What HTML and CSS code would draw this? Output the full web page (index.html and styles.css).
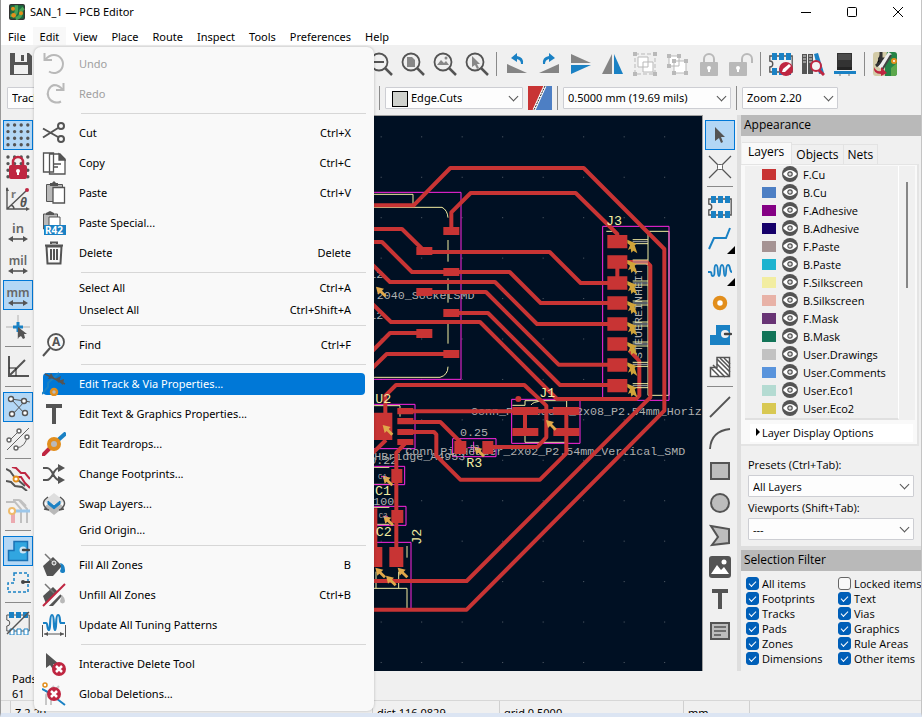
FILE: index.html
```html
<!DOCTYPE html>
<html lang="en">

<head>
    <meta charset="UTF-8">
    <meta name="viewport" content="width=device-width, initial-scale=1.0">
    <title>SAN_1 — PCB Editor</title>
    <link rel="stylesheet" href="styles.css">
</head>

<body>
    <!-- Icon set -->
    <svg class="sprite" width="0" height="0" aria-hidden="true">
        <symbol id="i-logo" viewBox="0 0 24 24"><rect x="1" y="1" width="22" height="22" rx="2" fill="#1d6b41" stroke="#333" stroke-width="2"/><path d="M2 17q8 1 9-6V2M10 22q9-2 8-12l4-4" stroke="#48a356" stroke-width="5" fill="none"/><circle cx="6" cy="7" r="3" fill="#e28e1c"/><circle cx="7" cy="17" r="3.500" fill="#e28e1c"/><circle cx="18" cy="14" r="3" fill="#e28e1c"/></symbol>
        <symbol id="i-undo" viewBox="0 0 24 24"><path d="M3 8Q7 3 12 3a9 9 0 1 1-5 16.500M2.500 1v7H10" fill="none" stroke="#b9b9b9" stroke-width="2"/></symbol>
        <symbol id="i-redo" viewBox="0 0 24 24"><path d="M21 8Q17 3 12 3a9 9 0 1 0 7 16.500M21.500 1v7H14" fill="none" stroke="#b9b9b9" stroke-width="2"/></symbol>
        <symbol id="i-cut" viewBox="0 0 24 24"><g fill="none" stroke="#545454" stroke-width="2"><path d="M1 7.500 16 16M1 16.500 16 7"/><circle cx="19" cy="5" r="3"/><circle cx="19" cy="18" r="3"/></g></symbol>
        <symbol id="i-copy" viewBox="0 0 24 24"><g fill="#fff" stroke="#545454" stroke-width="1.300"><path d="M1.500 2h10v19h-10zM7.500 3H18l5 5v15H7.500z"/><path d="M17 3v6h6z" fill="#545454"/><path d="M11 13h8M11 16h5"/></g></symbol>
        <symbol id="i-paste" viewBox="0 0 24 24"><path d="M4.500 3.500h16v17h-16z" fill="#b9b9b9" stroke="#545454"/><path d="M8 5V2h2l2-2 2 2h2v3z" fill="#545454"/><path d="M11 6.500h11.500V22H11z" fill="#fff" stroke="#545454" stroke-width="1.300"/></symbol>
        <symbol id="i-pastespecial" viewBox="0 0 24 24"><path d="M1.500 3h14v15h-14z" fill="#b9b9b9" stroke="#545454"/><path d="M4 4V2l4-2 4 2v2z" fill="#545454"/><path d="M7 6h11v12H7z" fill="#fff" stroke="#545454"/><path d="M2 14h22v10H2z" fill="#1a81c4"/><text x="3" y="22.500" font-size="10" font-weight="bold" fill="#fff">R42</text></symbol>
        <symbol id="i-trash" viewBox="0 0 24 24"><path d="M4.500 5.500h15l-1 17h-13z" fill="#f9f9f9" stroke="#545454" stroke-width="2"/><path d="M3 4.500h18M9 3V1.500h6V3M9 8v11M12 8v11M15 8v11" fill="none" stroke="#545454" stroke-width="2"/></symbol>
        <symbol id="i-find" viewBox="0 0 24 24"><circle cx="14" cy="9" r="8" fill="none" stroke="#545454" stroke-width="1.800"/><path d="m8 15-7 8" stroke="#545454" stroke-width="2"/><text x="10" y="13" font-size="12" font-weight="bold" fill="#545454">A</text></symbol>
        <symbol id="i-trackvia" viewBox="0 0 24 24"><path d="M0 22 6 15v-4L17 1" stroke="#1a81c4" stroke-width="2" fill="none"/><path d="m3 2 20 10" stroke="#545454" stroke-width="1.500"/><path d="m12 6-6 1 3-6zM13 7l6-3-2 7zM16 9l6-2-1 6z" fill="#545454"/><circle cx="12" cy="20" r="3" fill="#b9b9b9" stroke="#e28e1c" stroke-width="2.500"/></symbol>
        <symbol id="i-text" viewBox="0 0 24 24"><path d="M4 2h16v4h-6v16h-4V6H4z" fill="#545454"/></symbol>
        <symbol id="i-teardrop" viewBox="0 0 24 24"><path d="m15 9 9-8" stroke="#1a81c4" stroke-width="4"/><path d="m8 16-8 8" stroke="#bf2641" stroke-width="4"/><circle cx="12" cy="12" r="5" fill="#b9b9b9" stroke="#e28e1c" stroke-width="4"/></symbol>
        <symbol id="i-shuffle" viewBox="0 0 24 24"><path d="M1 6h4q3 0 6 6t6 6h3M1 18h4q3 0 6-6t6-6h3" fill="none" stroke="#545454" stroke-width="2"/><path d="m16 2 7 4-7 4zM16 14l7 4-7 4z" fill="#545454"/></symbol>
        <symbol id="i-swap" viewBox="0 0 24 24"><path d="m12 7 10 8-10 8-10-8z" fill="#b9b9b9"/><path d="m12 1 10 8-10 8L2 9z" fill="#dedede"/><path d="m6 9 6 5 6-5v3l-6 5-6-5z" fill="#1a81c4" stroke="#1a81c4"/><path d="M6 5q-9 6 0 13M18 5q9 6 0 13M7 18l-5-1M17 18l5-1" stroke="#545454" fill="none" stroke-width="1.500"/></symbol>
        <symbol id="i-fill" viewBox="0 0 24 24"><path d="m1 13 10-9 9 9-9 10H5z" fill="#545454"/><path d="m3 1 9 9" stroke="#777" stroke-width="1.500"/><circle cx="12" cy="10" r="2" fill="#777" stroke="#fff"/><path d="M18 10q5 1 5 7a2.500 2.500 0 0 1-5 1q2-4 0-8z" fill="#1a81c4"/></symbol>
        <symbol id="i-unfill" viewBox="0 0 24 24"><path d="m1 13 10-9 9 9-9 10H5z" fill="#545454"/><path d="m3 1 9 9" stroke="#777" stroke-width="1.500"/><path d="M20 12q3 3 3 6a2.500 2.500 0 0 1-5 0z" fill="#b9b9b9"/><path d="M3 24 24 3" stroke="#f9f9f9" stroke-width="4"/><path d="M1 23 23 1" stroke="#bf2641" stroke-width="2"/></symbol>
        <symbol id="i-tuning" viewBox="0 0 24 24"><path d="M1 10h3c2 0 1 7 3 7s0-15 3-15 1 15 3 15 0-15 3-15 1 8 3 8h4" fill="none" stroke="#1a81c4" stroke-width="2.200"/><path d="M.5 12v12M23.500 12v12M2 21h20" stroke="#545454"/><path d="m2 21 4-2v4zM22 21l-4-2v4z" fill="#545454"/></symbol>
        <symbol id="i-delcursor" viewBox="0 0 24 24"><path d="M4 1v15l4-3 4 6 3-2-4-5h6z" fill="#545454"/><circle cx="17" cy="17" r="7" fill="#bf2641"/><path d="m14 14 6 6m0-6-6 6" stroke="#fff" stroke-width="2.500"/></symbol>
        <symbol id="i-delglobal" viewBox="0 0 24 24"><path d="M4 23V13l8-9M9 23V13l8-9" fill="none" stroke="#c8c8c8" stroke-width="2"/><path d="m0 7 6 3 17 13" stroke="#1a81c4" stroke-width="2"/><circle cx="3" cy="3" r="2" fill="#fff" stroke="#e28e1c" stroke-width="1.500"/><circle cx="12" cy="12" r="7" fill="#bf2641"/><path d="m9 9 6 6m0-6-6 6" stroke="#fff" stroke-width="2.500"/></symbol>
        <symbol id="i-save" viewBox="0 0 24 24"><path d="M1 1h19l3 3v19H1z" fill="#545454"/><path d="M6 1h12v9H6zM5 13h14v9H5z" fill="#f0f0f0"/><path d="M12 3h3v6h-3z" fill="#545454"/></symbol>
        <symbol id="i-lens" viewBox="0 0 24 24"><g fill="none" stroke="#545454"><circle cx="10" cy="10" r="8.500" stroke-width="1.800"/><path d="m16 16 7 7" stroke-width="2.500"/></g></symbol>
        <symbol id="i-zoomout" viewBox="0 0 24 24"><use href="#i-lens"/><path d="M5 10h10" stroke="#545454" stroke-width="2"/></symbol>
        <symbol id="i-zoompage" viewBox="0 0 24 24"><use href="#i-lens"/><path d="M6 5h5l3 3v7H6z" fill="#888"/></symbol>
        <symbol id="i-zoomobj" viewBox="0 0 24 24"><use href="#i-lens"/><path d="m4 13 4-5 3 3 2-2 3 4z" fill="#888"/><circle cx="13" cy="6" r="1.500" fill="#888"/></symbol>
        <symbol id="i-zoomsel" viewBox="0 0 24 24"><use href="#i-lens"/><path d="M7 4v11l3-2 2 4 2-1-2-4h3z" fill="#888"/></symbol>
        <symbol id="i-rotl" viewBox="0 0 24 24"><path d="M2 12v9h20z" fill="#848484"/><path d="m6 6 6-5v3q7 1 6 8h-2q0-4-4-5v3z" fill="#1a81c4"/></symbol>
        <symbol id="i-rotr" viewBox="0 0 24 24"><path d="M22 12v9H2z" fill="#848484"/><path d="m18 6-6-5v3q-7 1-6 8h2q0-4 4-5v3z" fill="#1a81c4"/></symbol>
        <symbol id="i-flipv" viewBox="0 0 24 24"><path d="M2 2v9h20z" fill="#848484"/><path d="M2 13v9l20-9z" fill="#1a81c4"/></symbol>
        <symbol id="i-fliph" viewBox="0 0 24 24"><path d="M11 2v20H1z" fill="#848484"/><path d="M13 2v20h9z" fill="#1a81c4"/></symbol>
        <symbol id="i-group" viewBox="0 0 24 24"><g fill="#fff" stroke="#b9b9b9"><path d="M2 2h20v20H2z" fill="none" stroke-dasharray="4 2"/><path d="M5 5h10v10H5zM10 10h10v10H10z"/></g><path d="M0 0h4v4H0zM20 0h4v4h-4zM0 20h4v4H0zM20 20h4v4h-4z" fill="#b9b9b9"/></symbol>
        <symbol id="i-ungroup" viewBox="0 0 24 24"><path d="M4 4h10v10H4zM9 9h12v12H9z" fill="#fff" stroke="#b9b9b9"/><path d="M2 2h4v4H2zM12 2h4v4h-4zM2 12h4v4H2zM7 7h4v4H7zM19 7h4v4h-4zM7 19h4v4H7zM19 19h4v4h-4z" fill="#b9b9b9"/></symbol>
        <symbol id="i-lock" viewBox="0 0 24 24"><path d="M7 11V7a5 5 0 0 1 10 0v4" fill="none" stroke="#b9b9b9" stroke-width="2"/><rect x="3" y="10" width="18" height="14" rx="1" fill="#b9b9b9"/><circle cx="12" cy="16" r="2" fill="#fff"/><path d="M11 16h2v4h-2z" fill="#fff"/></symbol>
        <symbol id="i-unlock" viewBox="0 0 24 24"><path d="M13 11V7a5 5 0 0 1 10 0v4" fill="none" stroke="#b9b9b9" stroke-width="2"/><rect x="0" y="10" width="18" height="14" rx="1" fill="#b9b9b9"/><circle cx="9" cy="16" r="2" fill="#fff"/><path d="M8 16h2v4H8z" fill="#fff"/></symbol>
        <symbol id="i-fp" viewBox="0 0 24 24"><path d="M.8 4h22.400v16H.8v-5q3 0 3-3t-3-3z" fill="none" stroke="#545454" stroke-width="1.300"/><path d="M3 1h5v7H3zM10 1h5v7h-5zM17 1h5v7h-5zM3 16h5v7H3zM10 16h5v7h-5zM17 16h5v7h-5z" fill="#1a81c4"/></symbol>
        <symbol id="i-fpedit" viewBox="0 0 24 24"><use href="#i-fp"/><circle cx="17" cy="17" r="7" fill="#bf2641"/><path d="m13 20 1-3 6-5 2 2-6 6z" fill="#fff"/></symbol>
        <symbol id="i-libs" viewBox="0 0 24 24"><path d="M1 2h5v20H1zM7 2h5v20H7z" fill="#545454"/><path d="m13 2 4-1 6 20-5 1z" fill="#1a81c4"/><path d="M2 4h3M2 7h3M2 10h3M8 4h3M8 7h3M8 10h3" stroke="#ddd"/><circle cx="15" cy="14" r="5" fill="#f4f4f4" stroke="#bf2641" stroke-width="2"/><path d="m18 18 5 5" stroke="#bf2641" stroke-width="3"/></symbol>
        <symbol id="i-view3d" viewBox="0 0 24 24"><path d="M4 1h15v14H4z" fill="#333"/><path d="M5 2h13v6H5z" fill="#4c4c4c"/><path d="M4 15h15v3H4z" fill="#242424"/><path d="M1 19h22v3H1z" fill="#1a81c4"/><path d="M7 22v2M16 22v2" stroke="#777"/></symbol>
        <symbol id="i-update" viewBox="0 0 24 24"><rect width="24" height="24" rx="3" fill="#d3cba7"/><path d="M14 0h7q3 0 3 3v18q0 3-3 3h-9V12z" fill="#258447"/><path d="M18 24V16l6-5v10q0 3-3 3z" fill="#5ca74b"/><path d="M8 0v10l-5 4M5 7h7" stroke="#333" stroke-width="3"/><path d="M17 1 7 16" stroke="#eee" stroke-width="4"/><path d="M18 3 9 18" stroke="#444" stroke-width="2"/><circle cx="21" cy="9" r="2" fill="#fff" stroke="#e28e1c" stroke-width="2"/><path d="M1 15q2 5 7 4v-4l6 6-6 3v-2q-8 0-7-7z" fill="#bf2641"/></symbol>
        <symbol id="i-pair" viewBox="0 0 24 24"><path d="M0 0h18L7 24H0z" fill="#c83434"/><path d="M18 0h6v24H7z" fill="#4d7fc4"/><path d="M17 0 6 24" stroke="#fff" stroke-width="3"/><path d="M17 0 6 24" stroke="#222" stroke-dasharray="2 1"/></symbol>
        <symbol id="i-grid" viewBox="0 0 24 24"><g fill="none" stroke="#545454" stroke-width="3.400" stroke-linecap="round" stroke-dasharray="0 6.600"><path d="M2 2h21M2 8.600h21M2 15.200h21M2 21.800h21"/></g></symbol>
        <symbol id="i-gridlock" viewBox="0 0 24 24"><use href="#i-grid"/><path d="M7 11V7a5 5 0 0 1 10 0v4" fill="none" stroke="#bf2641" stroke-width="2.500"/><rect x="3" y="10" width="18" height="14" rx="2" fill="#bf2641"/><circle cx="12" cy="16" r="2" fill="#fff"/><path d="M11 16h2v4h-2z" fill="#fff"/></symbol>
        <symbol id="i-polar" viewBox="0 0 24 24"><path d="M1 1v21h21M1 22 20 4M5 18q3 1 3 4" fill="none" stroke="#545454" stroke-width="1.400"/><path d="m1 0 2 4h-4zM24 22l-4-2v4z" fill="#545454"/><circle cx="21" cy="3" r="2" fill="#bf2641"/><text x="5" y="11" font-size="11" font-weight="bold" fill="#777">r</text><text x="14" y="20" font-size="12" font-weight="bold" font-style="italic" fill="#545454">θ</text></symbol>
        <symbol id="i-arrows" viewBox="0 0 24 24"><path d="M4 20h16" stroke="#545454" stroke-width="1.600"/><path d="m2 20 5-3v6zM22 20l-5-3v6z" fill="#545454"/></symbol>
        <symbol id="i-in" viewBox="0 0 24 24"><text x="12" y="14" text-anchor="middle" font-size="13" font-weight="600" fill="#666">in</text><use href="#i-arrows"/></symbol>
        <symbol id="i-mil" viewBox="0 0 24 24"><text x="12" y="14" text-anchor="middle" font-size="12" font-weight="600" fill="#666">mil</text><use href="#i-arrows"/></symbol>
        <symbol id="i-mm" viewBox="0 0 24 24"><text x="12" y="14" text-anchor="middle" font-size="12" font-weight="600" fill="#666">mm</text><use href="#i-arrows"/></symbol>
        <symbol id="i-cross" viewBox="0 0 24 24"><path d="M0 12h24M12 0v24" stroke="#b0b0b0"/><path d="M7 12h10M12 7v10" stroke="#1a81c4" stroke-width="3"/><path d="M12 12v11l3-2 2 3 2-1-1-4h3z" fill="#545454"/></symbol>
        <symbol id="i-angle" viewBox="0 0 24 24"><path d="M3 1v20h20M3 21 19 5" fill="none" stroke="#545454" stroke-width="2"/><path d="M3 13h7v8" fill="none" stroke="#222"/></symbol>
        <symbol id="i-rats" viewBox="0 0 24 24"><path d="m5 4 14 2 5 1M19 6 6 20M5 4l14 15" fill="none" stroke="#545454"/><g fill="#fff" stroke="#545454" stroke-width="1.400"><circle cx="5" cy="4" r="2.500"/><circle cx="18" cy="6" r="2.500"/><circle cx="6" cy="19" r="2.500"/><circle cx="19" cy="18" r="2.500"/></g></symbol>
        <symbol id="i-curved" viewBox="0 0 24 24"><path d="M1 23 23 1M4 13 13 4M21 9q-1 11-11 12" fill="none" stroke="#666"/><g fill="#fff" stroke="#666" stroke-width="1.400"><circle cx="3" cy="13" r="2"/><circle cx="13" cy="4" r="2"/><circle cx="21" cy="10" r="2"/><circle cx="10" cy="21" r="2"/></g></symbol>
        <symbol id="i-nets" viewBox="0 0 24 24"><path d="m0 2 4 2 5 7M12 13l7 6M0 14l5 1 4 4 7 1 5 4" fill="none" stroke="#545454" stroke-width="2"/><path d="m6 0 4 1 5 5h4l5 6M12 10h3l4 6 5 5" fill="none" stroke="#bf2641" stroke-width="2"/><circle cx="10" cy="12" r="2.500" fill="#fff" stroke="#e28e1c" stroke-width="1.800"/></symbol>
        <symbol id="i-fade" viewBox="0 0 24 24"><path d="M0 3h9l6 7v14M7 1h6l8 9v14M14 1l6 6" fill="none" stroke="#c0c0c0" stroke-width="2"/><path d="M7 14v10" stroke="#ecaab0" stroke-width="4"/><path d="M9 12h15" stroke="#9cc7ea" stroke-width="3"/><circle cx="6" cy="12" r="3" fill="#fff" stroke="#eebb6c" stroke-width="2"/></symbol>
        <symbol id="i-zonefill" viewBox="0 0 24 24"><path d="M8 2.500h13.500v19H2.500v-10H8z" fill="#31a6e0" stroke="#1a71b4" stroke-width="1.500"/><circle cx="17" cy="11" r="3.500" fill="#cde6f7"/><path d="M17 11h6" stroke="#444" stroke-width="2.400" stroke-linecap="round"/></symbol>
        <symbol id="i-zoneline" viewBox="0 0 24 24"><path d="M8 2h14v19H2V12h6z" fill="none" stroke="#1a81c4" stroke-width="1.500" stroke-dasharray="3 2"/><path d="M17 11h7" stroke="#444" stroke-width="2"/><circle cx="17" cy="11" r="2" fill="#444"/></symbol>
        <symbol id="i-fpline" viewBox="0 0 24 24"><path d="M.8 4h22.400v16H.8v-5q3 0 3-3t-3-3z" fill="none" stroke="#545454"/><path d="M3 1h5v6H3zM10 1h5v6h-5zM17 1h5v6h-5z" fill="#1a81c4"/><path d="M4 18h4v6H4zM11 18h4v6h-4zM18 18h4v6h-4z" fill="#fff" stroke="#1a81c4"/><path d="M1 23 23 1" stroke="#545454" stroke-width="1.500"/></symbol>
        <symbol id="i-cursor" viewBox="0 0 24 24"><path d="M7 4v14l4-3 2 5 2-1-2-5h4z" fill="#545454"/></symbol>
        <symbol id="i-junction" viewBox="0 0 24 24"><path d="m1 1 22 22M23 1 1 23" stroke="#555" stroke-width="1.200"/><rect x="9.500" y="9.500" width="5" height="5" rx="1" fill="#fff" stroke="#666"/></symbol>
        <symbol id="i-track" viewBox="0 0 24 24"><path d="m1 22 5-11h12l4-10" fill="none" stroke="#1a81c4" stroke-width="2"/></symbol>
        <symbol id="i-meander" viewBox="0 0 24 24"><path d="M0 13h2c3 0 0 4 3 4s0-11 3-11 1 11 3 11 0-11 3-11 1 11 3 11 0-11 3-11 1 7 4 7" fill="none" stroke="#1a81c4" stroke-width="1.800"/></symbol>
        <symbol id="i-via" viewBox="0 0 24 24"><circle cx="12" cy="12" r="5" fill="#fff" stroke="#e28e1c" stroke-width="4.500"/></symbol>
        <symbol id="i-zone" viewBox="0 0 24 24"><path d="M8 2h14v20H2V12h6z" fill="#1a81c4"/><circle cx="17" cy="11" r="4" fill="#f0f0f0"/><path d="M17 11h6" stroke="#444" stroke-width="2.400" stroke-linecap="round"/></symbol>
        <symbol id="i-hatch" viewBox="0 0 24 24"><path d="M9 2.500h12.500v19h-19v-9H9z" fill="#fff" stroke="#545454" stroke-width="1.500"/><path d="m3 13 8 8M5 10l12 12M9 9l12 12M9 4l13 13M12 3l10 10M16 3l6 6" stroke="#545454" stroke-width="1.500"/></symbol>
        <symbol id="i-line" viewBox="0 0 24 24"><path d="M2 22 22 2" stroke="#545454" stroke-width="1.800"/></symbol>
        <symbol id="i-arc" viewBox="0 0 24 24"><path d="M2 22Q3 4 22 2" fill="none" stroke="#545454" stroke-width="1.800"/></symbol>
        <symbol id="i-rect" viewBox="0 0 24 24"><path d="M3 4h18v16H3z" fill="#bdbdbd" stroke="#545454" stroke-width="2"/></symbol>
        <symbol id="i-circle" viewBox="0 0 24 24"><circle cx="12" cy="12" r="9" fill="#bdbdbd" stroke="#545454" stroke-width="2"/></symbol>
        <symbol id="i-poly" viewBox="0 0 24 24"><path d="m3 3 18 3v14L4 22l6-8z" fill="#bdbdbd" stroke="#545454" stroke-width="2"/></symbol>
        <symbol id="i-image" viewBox="0 0 24 24"><rect x="1" y="1" width="22" height="22" rx="3" fill="#545454"/><path d="m3 19 6-9 4 5 3-3 5 7z" fill="#fff"/><circle cx="16" cy="7" r="2.500" fill="#fff"/></symbol>
        <symbol id="i-textbox" viewBox="0 0 24 24"><path d="M3 4h18v16H3z" fill="#bdbdbd" stroke="#545454" stroke-width="2"/><path d="M6 8h12M6 12h12M6 16h7" stroke="#545454" stroke-width="1.500"/></symbol>
        <symbol id="i-eye" viewBox="0 0 16 16"><circle cx="8" cy="8" r="8" fill="#545454"/><path d="M1 8q7-8 14 0-7 8-14 0z" fill="#fff"/><circle cx="8" cy="8" r="2.200" fill="#ddd" stroke="#545454" stroke-width="1.200"/></symbol>
    </svg>

    <header class="titlebar">
        <svg class="app-icon"><use href="#i-logo"/></svg>
        <span class="title">SAN_1 — PCB Editor</span>
        <div class="window-buttons">
            <button type="button" aria-label="Minimize"><svg viewBox="0 0 12 12"><path d="M1 6.500h10" stroke="#000"/></svg></button>
            <button type="button" aria-label="Maximize"><svg viewBox="0 0 12 12"><rect x="1.500" y="1.500" width="9" height="9" rx="1" fill="none" stroke="#000"/></svg></button>
            <button type="button" aria-label="Close"><svg viewBox="0 0 12 12"><path d="m1 1 10 10M11 1 1 11" stroke="#000"/></svg></button>
        </div>
    </header>

    <nav class="menubar">
        <button type="button">File</button>
        <button type="button" class="open">Edit</button>
        <button type="button">View</button>
        <button type="button">Place</button>
        <button type="button">Route</button>
        <button type="button">Inspect</button>
        <button type="button">Tools</button>
        <button type="button">Preferences</button>
        <button type="button">Help</button>
    </nav>

    <div class="toolbar">
        <button type="button" class="tool" aria-label="Save"><svg><use href="#i-save"/></svg></button>
        <span class="under-menu"></span>
        <button type="button" class="tool" aria-label="Zoom out"><svg><use href="#i-zoomout"/></svg></button>
        <button type="button" class="tool" aria-label="Zoom to page"><svg><use href="#i-zoompage"/></svg></button>
        <button type="button" class="tool" aria-label="Zoom to objects"><svg><use href="#i-zoomobj"/></svg></button>
        <button type="button" class="tool" aria-label="Zoom to selection"><svg><use href="#i-zoomsel"/></svg></button>
        <span class="sep"></span>
        <button type="button" class="tool" aria-label="Rotate left"><svg><use href="#i-rotl"/></svg></button>
        <button type="button" class="tool" aria-label="Rotate right"><svg><use href="#i-rotr"/></svg></button>
        <button type="button" class="tool" aria-label="Mirror vertically"><svg><use href="#i-flipv"/></svg></button>
        <button type="button" class="tool" aria-label="Mirror horizontally"><svg><use href="#i-fliph"/></svg></button>
        <button type="button" class="tool" aria-label="Group"><svg><use href="#i-group"/></svg></button>
        <button type="button" class="tool" aria-label="Ungroup"><svg><use href="#i-ungroup"/></svg></button>
        <button type="button" class="tool" aria-label="Lock"><svg><use href="#i-lock"/></svg></button>
        <button type="button" class="tool" aria-label="Unlock"><svg><use href="#i-unlock"/></svg></button>
        <span class="sep"></span>
        <button type="button" class="tool" aria-label="Footprint editor"><svg><use href="#i-fpedit"/></svg></button>
        <button type="button" class="tool" aria-label="Footprint browser"><svg><use href="#i-libs"/></svg></button>
        <button type="button" class="tool" aria-label="3D viewer"><svg><use href="#i-view3d"/></svg></button>
        <span class="sep"></span>
        <button type="button" class="tool" aria-label="Update from schematic"><svg><use href="#i-update"/></svg></button>
    </div>

    <div class="optionbar">
        <span class="combo combo-track"><select aria-label="Track width"><option>Track: use netclass width</option></select></span>
        <span class="sep"></span>
        <span class="combo combo-layer"><select aria-label="Layer"><option>Edge.Cuts</option></select></span>
        <button type="button" class="pair" aria-label="Layer pair"><svg><use href="#i-pair"/></svg></button>
        <span class="sep"></span>
        <span class="combo combo-grid"><select aria-label="Grid"><option>0.5000 mm (19.69 mils)</option></select></span>
        <span class="sep"></span>
        <span class="combo combo-zoom"><select aria-label="Zoom"><option>Zoom 2.20</option></select></span>
    </div>

    <main class="workspace">
        <div class="sidebar sidebar-left">
            <button type="button" class="tool active" aria-label="Grid"><svg><use href="#i-grid"/></svg></button>
            <button type="button" class="tool" aria-label="Grid overrides"><svg><use href="#i-gridlock"/></svg></button>
            <button type="button" class="tool" aria-label="Polar coordinates"><svg><use href="#i-polar"/></svg></button>
            <button type="button" class="tool" aria-label="Inches"><svg><use href="#i-in"/></svg></button>
            <button type="button" class="tool" aria-label="Mils"><svg><use href="#i-mil"/></svg></button>
            <button type="button" class="tool active" aria-label="Millimeters"><svg><use href="#i-mm"/></svg></button>
            <button type="button" class="tool" aria-label="Full crosshair"><svg><use href="#i-cross"/></svg></button>
            <span class="sep"></span>
            <button type="button" class="tool" aria-label="45 degree mode"><svg><use href="#i-angle"/></svg></button>
            <span class="sep"></span>
            <button type="button" class="tool active" aria-label="Ratsnest"><svg><use href="#i-rats"/></svg></button>
            <button type="button" class="tool" aria-label="Curved ratsnest"><svg><use href="#i-curved"/></svg></button>
            <span class="sep"></span>
            <button type="button" class="tool" aria-label="Net colors"><svg><use href="#i-nets"/></svg></button>
            <button type="button" class="tool" aria-label="High contrast"><svg><use href="#i-fade"/></svg></button>
            <span class="sep"></span>
            <button type="button" class="tool active" aria-label="Filled zones"><svg><use href="#i-zonefill"/></svg></button>
            <button type="button" class="tool" aria-label="Zone outlines"><svg><use href="#i-zoneline"/></svg></button>
            <span class="sep"></span>
            <button type="button" class="tool" aria-label="Sketch pads"><svg><use href="#i-fpline"/></svg></button>
        </div>

        <!-- Board, three units to a pixel -->
        <svg class="board" viewBox="-1003 3 2001 1665" preserveAspectRatio="xMaxYMin slice">
            <defs>
                <pattern id="dots" x="34" y="64" width="121.500" height="121.300" patternUnits="userSpaceOnUse"><rect width="3" height="3" fill="#56606a"/></pattern>
                <g id="pin"><path d="M16-6h46M16 6h46" stroke="#f2eda1" stroke-width="3"/><path d="M16 0h46" stroke="#aaa" stroke-width="3"/><path d="m0-6 28 12-6 5 8 24-12-8-6 6-2-12-8 4 6-14-8-6z" fill="#d0a43a"/></g>
                <path id="anchor" d="m0 0 24 6-6 6 14 14-6 6-14-14-6 6z" fill="#e0a84a"/>
            </defs>
            <rect x="-1010" width="2020" height="1680" fill="#001023"/>
            <rect x="-1010" width="2020" height="1680" fill="url(#dots)"/>
            <g class="silk">
                <path d="M0 238H131V271M0 277H218Q234 285 236 308M236 375V440M236 490V563M236 627V686M236 755Q236 780 212 787H0"/>
                <path d="M711 349H730M836 349H899V841H836ZM429 871H467V857H592V880M467 955V982H592V960M485 870Q490 860 520 858"/>
                <path d="M0 872H92V905M0 1057H60M0 1108H60M0 1177H60M0 1228H60M113 1293V1328M0 1420H113V1480M88 1370V1420M20 1370V1420"/>
            </g>
            <g class="courtyard">
                <path d="M0 232H275V793H0M700 334H899V856H700ZM427 853H632V985H427ZM250 971H380V1025H250ZM0 868H137V1001H0M0 1054H106V1109H0M0 1174H110V1231H0M0 1282H125V1480"/>
                <path d="M295 998H330M313 980V1016M35 1085H52M42 1204H55"/>
            </g>
            <g class="fab">
                <text x="22" y="553">2040_SocketSMD</text>
                <text x="0" y="490">12</text>
                <text x="0" y="612">12</text>
                <text x="305" y="900">Conn_PinHeader_2x08_P2.54mm_Horizontal</text>
                <text x="108" y="1019">Conn_PinHeader_2x02_P2.54mm_Vertical_SMD</text>
                <text x="15" y="1034">HBridge_A4953</text>
                <text x="272" y="962">0.25</text>
                <text x="0" y="1047">0.22</text>
                <text x="12" y="1169">100</text>
                <text transform="translate(818 732) rotate(-90)">STEUEREINHEIT</text>
            </g>
            <g class="copper">
                <path d="M0 271H133L243 159H643L885 402V887L292 1484H0M246 348V292L304 234H619L744 357V380"/>
                <path d="M0 342H98L165 408M165 411H541L634 504H744V441M0 381H38L128 471H421L514 564H744M0 440 62 501H377L503 627H744"/>
                <path d="M165 531H350L568 749H744M246 594H356L572 810H744M0 558 65 621H332L563 852H800L810 842V738L780 706"/>
                <path d="M774 441H832L843 452V847L292 1398H0M0 717 62 654H165M0 768 52 717H246"/>
                <path d="M48 930V842L80 810H465L531 872V967L504 996H355M108 889H591V1015L512 1094H273L201 1022V958L194 951H108"/>
                <path d="M467 889V950M108 921H213L273 981M108 985 81 1013V1320M0 1024 50 975M18 1180V1320"/>
            </g>
            <g class="pads">
                <path d="M714 360h60v40h-60zM714 421h60v40h-60zM714 484h60v40h-60zM714 544h60v40h-60zM714 607h60v40h-60zM714 667h60v40h-60zM714 730h60v40h-60zM714 792h60v40h-60z"/>
                <path d="M222 336h48v24h-48zM222 459h48v24h-48zM222 582h48v24h-48zM222 705h48v24h-48zM141 396h48v24h-48zM141 519h48v24h-48zM141 642h48v27h-48z"/>
                <path d="M429 876h78v24h-78zM552 876h78v24h-78zM429 939h78v24h-78zM552 939h78v24h-78zM255 978h36v39h-36zM339 978h33v39h-33z"/>
                <path d="M84 879h48v19H84zM84 909h48v19H84zM84 942h48v18H84zM84 972h48v18H84zM0 893h69v82H0zM66 1062h33v42H66zM66 1185h36v39H66zM60 1296h42v60H60zM0 1296h39v60H0z"/>
                <circle cx="447" cy="852" r="9"/>
            </g>
            <use href="#pin" x="774" y="380"/><use href="#pin" x="774" y="441"/><use href="#pin" x="774" y="504"/><use href="#pin" x="774" y="564"/>
            <use href="#pin" x="774" y="627"/><use href="#pin" x="774" y="687"/><use href="#pin" x="774" y="748"/><use href="#pin" x="774" y="812"/>
            <use href="#anchor" x="20" y="515"/><use href="#anchor" x="530" y="915"/><use href="#anchor" x="315" y="995"/><use href="#anchor" x="40" y="930"/>
            <use href="#anchor" x="40" y="1082"/><use href="#anchor" x="42" y="1202"/><use href="#anchor" x="50" y="1382"/><use href="#anchor" x="85" y="1358"/><use href="#anchor" x="18" y="1358"/>
            <g class="fab"><text class="ref" x="303" y="1004">R3</text><text class="ref" x="26" y="1092">C1</text><text class="ref" x="28" y="1210">C2</text></g>
            <g class="names">
                <text x="710" y="329">J3</text>
                <text x="510" y="845">J1</text>
                <text x="18" y="864">U2</text>
                <text x="291" y="1057">R3</text>
                <text x="17" y="1141">C1</text>
                <text x="19" y="1264">C2</text>
                <text transform="translate(155 1289) rotate(-90)">J2</text>
            </g>
        </svg>

        <div class="sidebar sidebar-right">
            <button type="button" class="tool active" aria-label="Select"><svg><use href="#i-cursor"/></svg></button>
            <button type="button" class="tool" aria-label="Local ratsnest"><svg><use href="#i-junction"/></svg></button>
            <span class="sep"></span>
            <button type="button" class="tool" aria-label="Place footprint"><svg><use href="#i-fp"/></svg></button>
            <button type="button" class="tool more" aria-label="Route tracks"><svg><use href="#i-track"/></svg></button>
            <button type="button" class="tool more" aria-label="Tune length"><svg><use href="#i-meander"/></svg></button>
            <button type="button" class="tool" aria-label="Place via"><svg><use href="#i-via"/></svg></button>
            <button type="button" class="tool" aria-label="Draw zone"><svg><use href="#i-zone"/></svg></button>
            <button type="button" class="tool" aria-label="Draw rule area"><svg><use href="#i-hatch"/></svg></button>
            <span class="sep"></span>
            <button type="button" class="tool" aria-label="Line"><svg><use href="#i-line"/></svg></button>
            <button type="button" class="tool" aria-label="Arc"><svg><use href="#i-arc"/></svg></button>
            <button type="button" class="tool" aria-label="Rectangle"><svg><use href="#i-rect"/></svg></button>
            <button type="button" class="tool" aria-label="Circle"><svg><use href="#i-circle"/></svg></button>
            <button type="button" class="tool" aria-label="Polygon"><svg><use href="#i-poly"/></svg></button>
            <button type="button" class="tool" aria-label="Image"><svg><use href="#i-image"/></svg></button>
            <button type="button" class="tool" aria-label="Text"><svg><use href="#i-text"/></svg></button>
            <button type="button" class="tool" aria-label="Text box"><svg><use href="#i-textbox"/></svg></button>
        </div>

        <aside class="panel">
            <h2>Appearance</h2>
            <div class="tabs">
                <button type="button" class="selected">Layers</button>
                <button type="button">Objects</button>
                <button type="button">Nets</button>
            </div>
            <div class="tab-page">
                <div class="layer-box">
                    <ul class="layers">
                        <li><i class="f-cu"></i><svg><use href="#i-eye"/></svg>F.Cu</li>
                        <li><i class="b-cu"></i><svg><use href="#i-eye"/></svg>B.Cu</li>
                        <li><i class="f-adhes"></i><svg><use href="#i-eye"/></svg>F.Adhesive</li>
                        <li><i class="b-adhes"></i><svg><use href="#i-eye"/></svg>B.Adhesive</li>
                        <li><i class="f-paste"></i><svg><use href="#i-eye"/></svg>F.Paste</li>
                        <li><i class="b-paste"></i><svg><use href="#i-eye"/></svg>B.Paste</li>
                        <li><i class="f-silk"></i><svg><use href="#i-eye"/></svg>F.Silkscreen</li>
                        <li><i class="b-silk"></i><svg><use href="#i-eye"/></svg>B.Silkscreen</li>
                        <li><i class="f-mask"></i><svg><use href="#i-eye"/></svg>F.Mask</li>
                        <li><i class="b-mask"></i><svg><use href="#i-eye"/></svg>B.Mask</li>
                        <li><i class="u-draw"></i><svg><use href="#i-eye"/></svg>User.Drawings</li>
                        <li><i class="u-comm"></i><svg><use href="#i-eye"/></svg>User.Comments</li>
                        <li><i class="u-eco1"></i><svg><use href="#i-eye"/></svg>User.Eco1</li>
                        <li><i class="u-eco2"></i><svg><use href="#i-eye"/></svg>User.Eco2</li>
                    </ul>
                    <div class="scroll"><span></span></div>
                </div>
                <button type="button" class="expander">Layer Display Options</button>
            </div>
            <div class="presets">
                <label for="presets">Presets (Ctrl+Tab):</label>
                <span class="combo"><select id="presets"><option>All Layers</option></select></span>
                <label for="viewports">Viewports (Shift+Tab):</label>
                <span class="combo"><select id="viewports"><option>---</option></select></span>
            </div>
            <h2>Selection Filter</h2>
            <div class="filter">
                <label><input type="checkbox" checked>All items</label>
                <label><input type="checkbox">Locked items</label>
                <label><input type="checkbox" checked>Footprints</label>
                <label><input type="checkbox" checked>Text</label>
                <label><input type="checkbox" checked>Tracks</label>
                <label><input type="checkbox" checked>Vias</label>
                <label><input type="checkbox" checked>Pads</label>
                <label><input type="checkbox" checked>Graphics</label>
                <label><input type="checkbox" checked>Zones</label>
                <label><input type="checkbox" checked>Rule Areas</label>
                <label><input type="checkbox" checked>Dimensions</label>
                <label><input type="checkbox" checked>Other items</label>
            </div>
        </aside>
    </main>

    <div class="messages"><span>Pads</span><span>61</span></div>

    <footer class="statusbar">
        <span class="cell-zoom">Z 2.20</span>
        <span class="cell-dist">dist 116.0829</span>
        <span class="cell-grid">grid 0.5000</span>
        <span class="cell-unit">mm</span>
        <span class="cell-rest"></span>
    </footer>

    <div class="menu">
        <button type="button" disabled><svg><use href="#i-undo"/></svg>Undo</button>
        <button type="button" disabled><svg><use href="#i-redo"/></svg>Redo</button>
        <hr>
        <button type="button"><svg><use href="#i-cut"/></svg>Cut<kbd>Ctrl+X</kbd></button>
        <button type="button"><svg><use href="#i-copy"/></svg>Copy<kbd>Ctrl+C</kbd></button>
        <button type="button"><svg><use href="#i-paste"/></svg>Paste<kbd>Ctrl+V</kbd></button>
        <button type="button"><svg><use href="#i-pastespecial"/></svg>Paste Special...</button>
        <button type="button"><svg><use href="#i-trash"/></svg>Delete<kbd>Delete</kbd></button>
        <hr>
        <button type="button" class="plain">Select All<kbd>Ctrl+A</kbd></button>
        <button type="button" class="plain">Unselect All<kbd>Ctrl+Shift+A</kbd></button>
        <hr>
        <button type="button"><svg><use href="#i-find"/></svg>Find<kbd>Ctrl+F</kbd></button>
        <hr>
        <button type="button" class="current"><svg><use href="#i-trackvia"/></svg>Edit Track &amp; Via Properties...</button>
        <button type="button"><svg><use href="#i-text"/></svg>Edit Text &amp; Graphics Properties...</button>
        <button type="button"><svg><use href="#i-teardrop"/></svg>Edit Teardrops...</button>
        <button type="button"><svg><use href="#i-shuffle"/></svg>Change Footprints...</button>
        <button type="button"><svg><use href="#i-swap"/></svg>Swap Layers...</button>
        <button type="button" class="plain">Grid Origin...</button>
        <hr>
        <button type="button"><svg><use href="#i-fill"/></svg>Fill All Zones<kbd>B</kbd></button>
        <button type="button"><svg><use href="#i-unfill"/></svg>Unfill All Zones<kbd>Ctrl+B</kbd></button>
        <button type="button"><svg><use href="#i-tuning"/></svg>Update All Tuning Patterns</button>
        <hr>
        <button type="button"><svg><use href="#i-delcursor"/></svg>Interactive Delete Tool</button>
        <button type="button"><svg><use href="#i-delglobal"/></svg>Global Deletions...</button>
    </div>
</body>

</html>
```
FILE: styles.css
```css
* {
    box-sizing: border-box;
}

body {
    position: relative;
    display: flex;
    flex-direction: column;
    min-height: 100vh;
    margin: 0;
    border: solid #999;
    border-width: 0 1px 4px;
    border-right-color: #c4c4c4;
    border-bottom-color: #dce5f3;
    background: #f0f0f0;
    color: #000;
    font: 11px/15px "Noto Sans", "Open Sans", sans-serif;
    overflow: hidden;
}

button,
select {
    margin: 0;
    padding: 0;
    border: 0;
    background: none;
    color: inherit;
    font: inherit;
}

.sprite {
    display: none;
}

/* title and menu bar */
.titlebar {
    display: flex;
    align-items: center;
    height: 23px;
    padding-left: 8px;
    background: #fff;
}

.app-icon {
    width: 16px;
    height: 16px;
    margin-right: 5px;
}

.window-buttons {
    display: flex;
    margin-left: auto;
}

.window-buttons button {
    width: 46px;
    height: 22px;
}

.window-buttons svg {
    display: block;
    width: 12px;
    height: 12px;
    margin: 0 auto;
}

.menubar {
    display: flex;
    height: 22px;
    background: #fff;
}

.menubar button {
    height: 18px;
    margin-top: 4px;
    padding: 0 7px;
}

.menubar .open {
    background: #f8f8f8;
}

/* toolbars */
.toolbar {
    display: flex;
    align-items: center;
    height: 38px;
    padding-left: 4px;
}

.tool {
    position: relative;
    display: flex;
    flex: none;
    align-items: center;
    justify-content: center;
    width: 30px;
    height: 30px;
}

.tool svg {
    width: 24px;
    height: 24px;
}

.tool.active {
    border: 1px solid #0078d7;
    background: #b3d7f5;
}

.tool.more::after {
    content: "";
    position: absolute;
    right: 0;
    bottom: 0;
    border: 4px solid transparent;
    border-right-color: #000;
    border-bottom-color: #000;
}

.toolbar .tool {
    width: 32px;
}

.toolbar .sep {
    width: 8px;
    height: 24px;
    background: linear-gradient(#8a8a8a, #8a8a8a) 3px 0 / 1px 100% no-repeat;
}

.under-menu {
    width: 328px;
}

.optionbar {
    display: flex;
    align-items: center;
    gap: 5px;
    height: 32px;
    padding: 0 0 3px 6px;
}

.optionbar .sep {
    width: 1px;
    height: 24px;
    background: #8a8a8a;
}

.combo {
    position: relative;
    display: block;
}

.combo::after {
    content: "";
    position: absolute;
    top: 6px;
    right: 6px;
    width: 6px;
    height: 6px;
    border: solid #555;
    border-width: 0 1px 1px 0;
    transform: rotate(45deg);
}

.combo select {
    display: block;
    width: 100%;
    height: 22px;
    padding: 0 4px;
    border: 1px solid #cdced3;
    border-radius: 1px;
    background: #fdfdfd;
    appearance: none;
    font-size: 11px;
}

.combo-track {
    width: 367px;
}

.combo-layer {
    width: 138px;
}

.combo-layer select {
    padding-left: 25px;
}

.combo-layer::before {
    content: "";
    position: absolute;
    top: 4px;
    left: 7px;
    width: 14px;
    height: 14px;
    border: 1px solid #000;
    background: #d0d2cd;
}

.pair svg {
    display: block;
    width: 24px;
    height: 24px;
}

.combo-grid {
    width: 168px;
}

.combo-zoom {
    width: 96px;
}

/* workspace */
.workspace {
    display: flex;
    flex: 1;
}

.sidebar {
    display: flex;
    flex: none;
    flex-direction: column;
    gap: 2px;
    width: 38px;
    padding: 5px 2px 0;
}

.sidebar .sep {
    width: 26px;
    height: 6px;
    margin-left: 2px;
    background: linear-gradient(#8a8a8a, #8a8a8a) 0 2px / 100% 1px no-repeat;
}

.sidebar-left {
    width: 35px;
}

.sidebar-right {
    border-right: 4px solid #dedede;
}

.board {
    flex: 1;
    min-width: 0;
    height: 556px;
    border-top: 1px solid #a0a0a0;
    border-right: 1px solid #a0a0a0;
}

.board text {
    font-family: "Liberation Mono", monospace;
    font-size: 35px;
}

.silk,
.courtyard,
.copper {
    fill: none;
    stroke-width: 3;
}

.silk {
    stroke: #f2eda1;
}

.courtyard {
    stroke: #ff26e2;
}

.copper {
    stroke: #c83434;
    stroke-width: 12;
    stroke-linejoin: round;
}

.pads {
    fill: #c83434;
}

.fab {
    fill: #afafaf;
}

.board .ref {
    font-size: 22px;
}

.board .names text {
    font-size: 40px;
    fill: #f2eda1;
}

/* right hand panel */
.panel {
    flex: none;
    width: 180px;
    font-family: "Open Sans", "Noto Sans", sans-serif;
}

.panel h2 {
    height: 21px;
    margin: 0;
    padding-left: 3px;
    background: #b9b9b9;
    font-size: 12px;
    font-weight: normal;
    line-height: 20px;
}

.tabs {
    display: flex;
    align-items: flex-end;
    height: 28px;
    padding-left: 1px;
    font-size: 12px;
}

.tabs button {
    height: 20px;
    padding: 0 4px;
    border: 1px solid #e3e3e3;
    border-left: 0;
    border-bottom: 0;
}

.tabs .selected {
    height: 22px;
    padding: 0 7px 4px 6px;
    background: #f9f9f9;
}

.tab-page {
    height: 282px;
    margin-right: 2px;
    padding: 1px 2px 0 4px;
    border: 2px solid #e4e4e4;
    border-width: 1px 2px 2px 0;
    background: #f9f9f9;
}

.layer-box {
    display: flex;
    height: 254px;
    background: #f0f0f0;
}

.layers {
    flex: 1;
    margin: 0;
    padding: 0;
    border-right: 1px solid #fff;
    border-bottom: 2px solid #e0e0e0;
    list-style: none;
}

.layers li {
    display: flex;
    align-items: center;
    height: 18px;
    padding: 0 0 2px 17px;
}

.layers i {
    width: 14px;
    height: 11px;
}

.layers svg {
    width: 16px;
    height: 16px;
    margin: 0 5px 0 6px;
}

.f-cu { background: #c83434; }
.b-cu { background: #4d7fc4; }
.f-adhes { background: #840084; }
.b-adhes { background: #16006a; }
.f-paste { background: #a59393; }
.b-paste { background: #1db3cf; }
.f-silk { background: #f2eda1; }
.b-silk { background: #e8b2a7; }
.f-mask { background: #683475; }
.b-mask { background: #127458; }
.u-draw { background: #c2c2c2; }
.u-comm { background: #5994dc; }
.u-eco1 { background: #b4dbd2; }
.u-eco2 { background: #d8c852; }

.scroll {
    width: 16px;
    padding: 16px 7px 0;
}

.scroll span {
    display: block;
    height: 106px;
    background: #868686;
}

.expander {
    display: flex;
    align-items: center;
    width: 163px;
    height: 18px;
    margin: 4px 0 0 5px;
    padding: 0 0 2px 6px;
    background: #fff;
}

.expander::before {
    content: "";
    margin-right: 2px;
    border: 4px solid transparent;
    border-right-width: 0;
    border-left-color: #000;
}

.presets {
    height: 104px;
    padding: 11px 7px 0;
    border-bottom: 4px solid #dedede;
}

.presets label {
    display: block;
    height: 15px;
    margin-bottom: 3px;
}

.presets .combo {
    margin-bottom: 3px;
}

.filter {
    display: grid;
    grid-template-columns: 92px 1fr;
    padding: 5px 0 0 5px;
}

.filter label {
    display: flex;
    align-items: center;
    height: 15px;
    white-space: nowrap;
}

.filter input {
    flex: none;
    width: 13px;
    height: 13px;
    margin: 0 3px 0 0;
    border: 1px solid #666;
    border-radius: 3px;
    background: #f8f8f8;
    appearance: none;
}

.filter input:checked {
    border-color: #005fb8;
    background: #005fb8;
}

.filter input:checked::before {
    content: "";
    display: block;
    width: 6px;
    height: 3px;
    margin: 3px 0 0 2px;
    border: solid #fff;
    border-width: 0 0 1px 1px;
    transform: rotate(-45deg);
}

/* bottom rows */
.messages {
    display: flex;
    flex-direction: column;
    height: 30px;
    padding-left: 11px;
    border-bottom: 1px solid #d7d7d7;
}

.statusbar {
    display: flex;
    height: 12px;
    overflow: hidden;
}

.statusbar span {
    flex: none;
    height: 20px;
    padding: 4px 0 0 4px;
    border-left: 1px solid #d0d0d0;
}

.cell-zoom {
    width: 362px;
    margin-left: 9px;
}

.cell-dist {
    width: 127px;
}

.cell-grid {
    width: 184px;
}

.cell-unit {
    width: 66px;
}

/* drop-down menu */
.menu {
    position: absolute;
    top: 47px;
    left: 33px;
    width: 340px;
    padding: 2px 0;
    border-radius: 7px;
    background: #f9f9f9;
    box-shadow: 0 0 3px rgba(0, 0, 0, 0.25);
}

.menu button {
    position: relative;
    display: flex;
    align-items: center;
    width: 100%;
    height: 30px;
    padding: 0 23px 1px 8px;
    text-align: left;
}

.menu svg {
    width: 24px;
    height: 24px;
    margin-right: 13px;
}

.menu .plain {
    height: 22px;
    padding-left: 45px;
}

.menu button:disabled {
    color: #a0a0a0;
}

.menu hr {
    height: 9px;
    margin: 0 8px 0 47px;
    border: 0;
    background: linear-gradient(#d7d7d7, #d7d7d7) 0 4px / 100% 1px no-repeat;
}

.menu kbd {
    margin-left: auto;
    font: inherit;
}

/* rounded highlight behind the row under the pointer */
.menu .current {
    z-index: 0;
    color: #fff;
}

.menu .current::before {
    content: "";
    position: absolute;
    z-index: -1;
    inset: 4px 9px;
    border-radius: 4px;
    background: #0078d7;
}
```
